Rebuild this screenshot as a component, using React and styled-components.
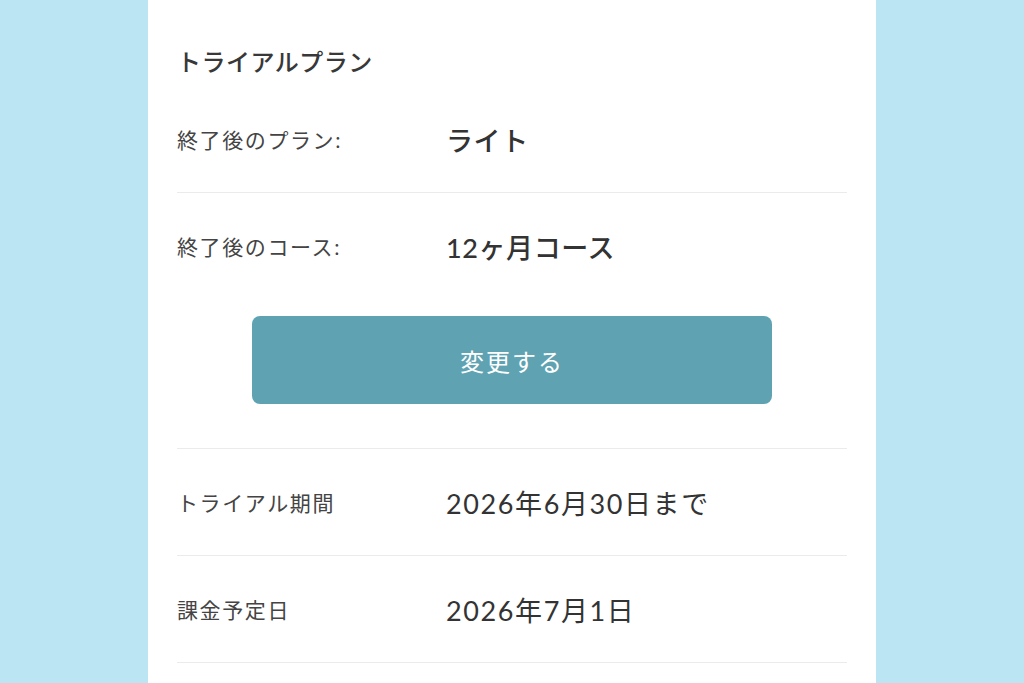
import styled, { createGlobalStyle } from "styled-components";

const GlobalStyle = createGlobalStyle`
    html, body {
        margin: 0;
        padding: 0;
        background: #bbe5f2;
    }
    body {
        font-family: "Lato", "Noto Sans CJK JP", sans-serif;
        color: #3a3a3a;
    }
`;

const rows = [
    { label: "トライアル期間", value: "2026年6月30日まで" },
    { label: "課金予定日", value: "2026年7月1日" },
];

const App = () => {
    return (
        <>
            <GlobalStyle />
            <Panel>
                <Title>トライアルプラン</Title>
                <Row>
                    <Label>終了後のプラン:</Label>
                    <Value strong>ライト</Value>
                </Row>
                <Row noLine>
                    <Label>終了後のコース:</Label>
                    <Value strong>12ヶ月コース</Value>
                </Row>
                <ButtonArea>
                    <ChangeButton>変更する</ChangeButton>
                </ButtonArea>
                {rows.map((r) => (
                    <Row key={r.label}>
                        <Label>{r.label}</Label>
                        <Value>{r.value}</Value>
                    </Row>
                ))}
            </Panel>
        </>
    );
};

export default App;

const Panel = styled.div`
    width: 728px;
    min-height: 683px;
    margin: 0 auto;
    background: #fff;
    box-sizing: border-box;
    padding: 44px 29px 0;
`;

const Title = styled.h2`
    margin: 0 0 6px;
    font-size: 24px;
    line-height: 36px;
    font-weight: 500;
    letter-spacing: 0.5px;
    color: #383838;
`;

const Row = styled.div`
    display: grid;
    grid-template-columns: 269px 1fr;
    align-items: center;
    height: 106px;
    border-bottom: ${(p) => (p.noLine ? "none" : "1px solid #ebebeb")};
`;

const Label = styled.div`
    font-size: 21px;
    letter-spacing: 1.6px;
    color: #444;
`;

const Value = styled.div`
    font-size: 27px;
    font-weight: ${(p) => (p.strong ? 500 : 400)};
    letter-spacing: ${(p) => (p.strong ? "0.6px" : "1.6px")};
    color: #333;
`;

const ButtonArea = styled.div`
    display: flex;
    justify-content: center;
    padding: 17px 0 44px;
    border-bottom: 1px solid #ebebeb;
`;

const ChangeButton = styled.button`
    width: 520px;
    height: 88px;
    border: none;
    border-radius: 8px;
    background: #5fa3b2;
    color: #fff;
    font-family: inherit;
    font-size: 24px;
    font-weight: 400;
    letter-spacing: 2px;
    cursor: pointer;
`;
